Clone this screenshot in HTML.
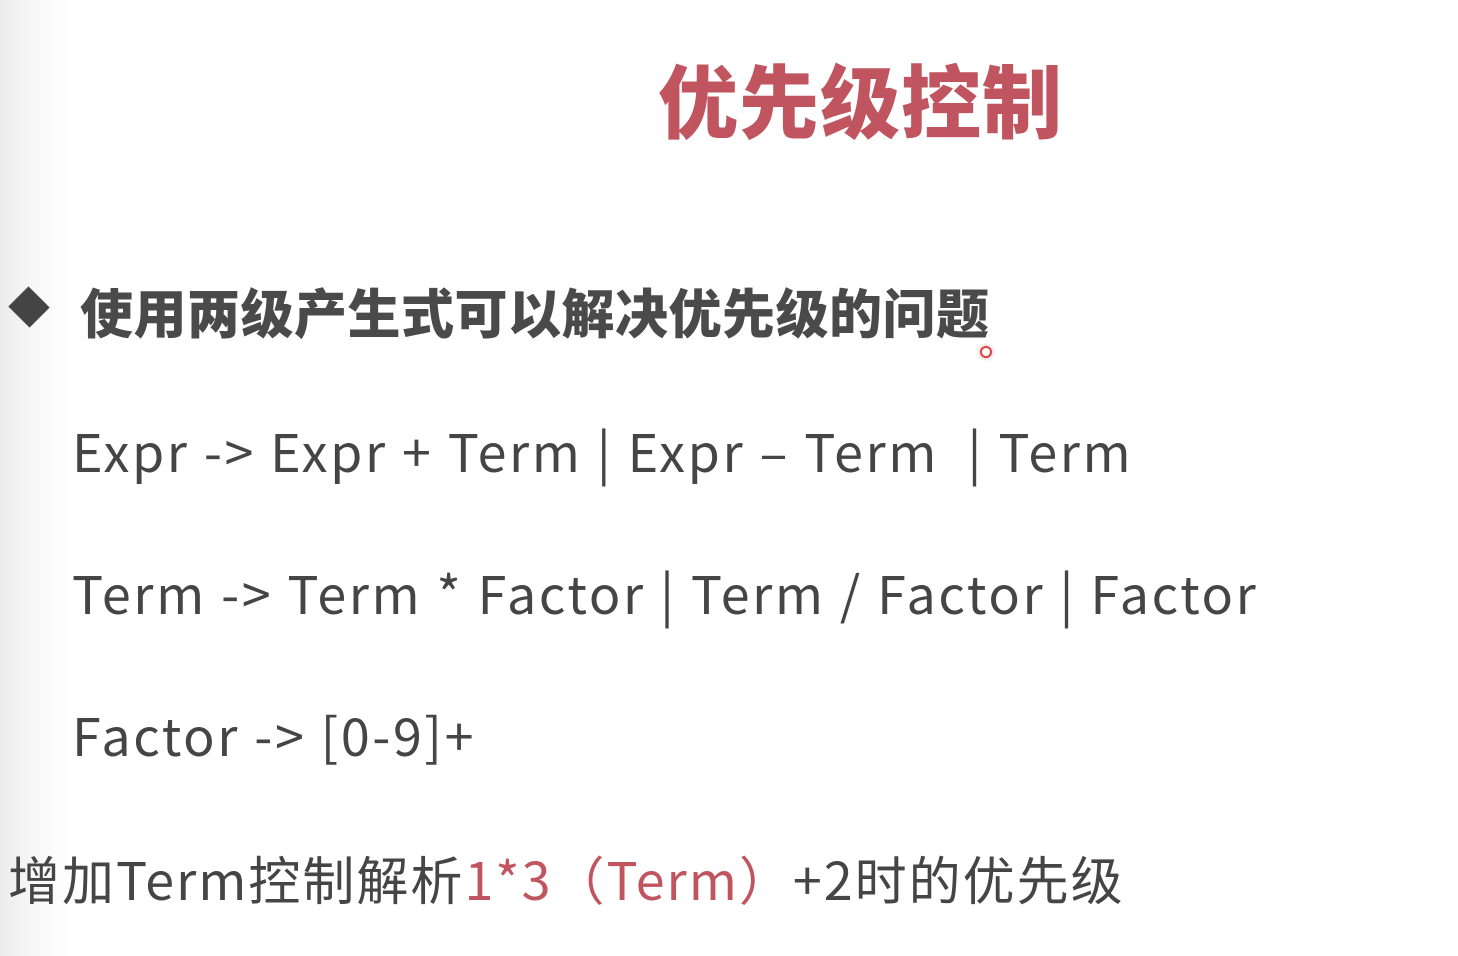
<!DOCTYPE html>
<html><head><meta charset="utf-8"><style>
html,body{margin:0;padding:0}
body{width:1458px;height:956px;position:relative;overflow:hidden;background:linear-gradient(to right,#ececec 0px,#f6f6f6 30px,#fdfdfd 60px,#fff 90px);font-family:"Noto Sans CJK SC","Liberation Sans",sans-serif;color:#454545}
.a{position:absolute;white-space:pre;line-height:1}
.t{left:658px;top:58px;font-size:80px;font-weight:900;color:#c05560;letter-spacing:1px}
.b{left:80px;top:285px;font-size:53px;font-weight:900;color:#4a4a4a;letter-spacing:0.5px}
.d{left:14px;top:292px;width:30px;height:30px;background:#444;transform:rotate(45deg) scaleY(0.95)}
.g{left:72px;font-size:52px;color:#454545;letter-spacing:2.6px}
.l{left:8px;top:852px;font-size:52px;color:#454545;letter-spacing:2px}
.r{color:#c05560}
.dot{left:980px;top:346px;width:8px;height:8px;border-radius:50%;border:2px solid #d44;background:#fff;box-shadow:0 0 4px rgba(220,60,60,.5)}
</style></head><body>
<div class="a t">优先级控制</div>
<div class="a d"></div>
<div class="a b">使用两级产生式可以解决优先级的问题</div>
<div class="a dot"></div>
<div class="a g" style="top:424px">Expr -&gt; Expr + Term | Expr – Term  | Term</div>
<div class="a g" style="top:566px">Term -&gt; Term * Factor | Term / Factor | Factor</div>
<div class="a g" style="top:708px">Factor -&gt; [0-9]+</div>
<div class="a l">增加Term控制解析<span class="r">1*3（Term）</span>+2时的优先级</div>
</body></html>
